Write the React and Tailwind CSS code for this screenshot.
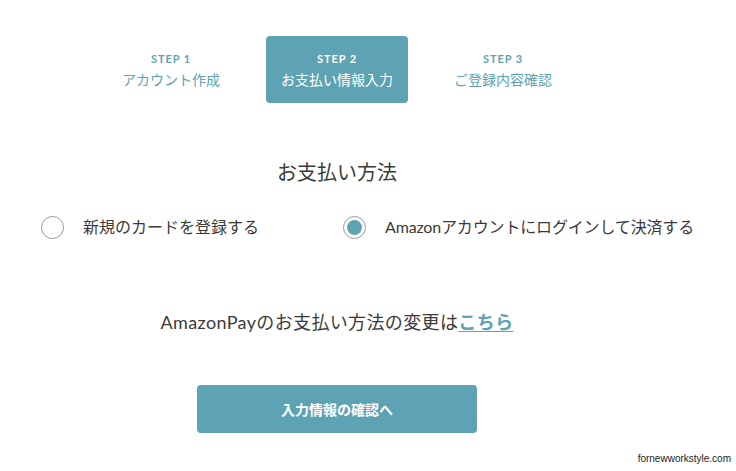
import React from 'react'

const font = { fontFamily: 'Lato, "Noto Sans CJK JP", sans-serif' }

const steps = [
  { no: 'STEP 1', label: 'アカウント作成' },
  { no: 'STEP 2', label: 'お支払い情報入力', active: true },
  { no: 'STEP 3', label: 'ご登録内容確認' },
]

const Radio = ({ checked }) => (
  <span className='w-[23px] h-[23px] rounded-full border border-[#9a9a9a] bg-white flex items-center justify-center shrink-0'>
    {checked && <span className='w-[15px] h-[15px] rounded-full bg-[#5ea3b3]'></span>}
  </span>
)

const App = () => {
  return (
    <div className='relative w-[736px] h-[471px] bg-white overflow-hidden' style={font}>
      <div className='w-[674px] flex flex-col items-center'>
        <div className='flex gap-[24px] mt-[36px]'>
          {steps.map((s, i) => (
            <div
              key={i}
              className={`w-[142px] h-[67px] rounded-[4px] flex flex-col items-center justify-center ${s.active ? 'bg-[#5ea3b3] text-white' : 'text-[#5ea3b3]'}`}
            >
              <span className='text-[11px] font-bold tracking-[0.08em] leading-none'>{s.no}</span>
              <span className='text-[14px] leading-none mt-[9px]'>{s.label}</span>
            </div>
          ))}
        </div>

        <h2 className='text-[20px] text-[#3a3a3a] mt-[59px] leading-none'>お支払い方法</h2>
      </div>

      <div className='flex mt-[33px] pl-[41px] text-[16px] text-[#3a3a3a]'>
        <label className='w-[302px] flex items-center gap-[19px]'>
          <Radio />
          <span>新規のカードを登録する</span>
        </label>
        <label className='flex items-center gap-[19px]'>
          <Radio checked />
          <span className='tracking-[-0.01em]'>Amazonアカウントにログインして決済する</span>
        </label>
      </div>

      <div className='w-[674px] flex flex-col items-center'>
        <p className='text-[18px] text-[#3a3a3a] mt-[74px] leading-none tracking-[0.02em]'>
          AmazonPayのお支払い方法の変更は
          <a className='text-[#5ea3b3] font-semibold underline underline-offset-2'>こちら</a>
        </p>

        <button className='mt-[54px] w-[280px] h-[48px] rounded-[4px] bg-[#5ea3b3] text-white text-[14px] font-bold'>
          入力情報の確認へ
        </button>
      </div>

      <span
        className='absolute right-[5px] bottom-[5px] text-[10px] text-[#222]'
        style={{ fontFamily: '"Liberation Sans", Arial, sans-serif' }}
      >
        fornewworkstyle.com
      </span>
    </div>
  )
}

export default App
